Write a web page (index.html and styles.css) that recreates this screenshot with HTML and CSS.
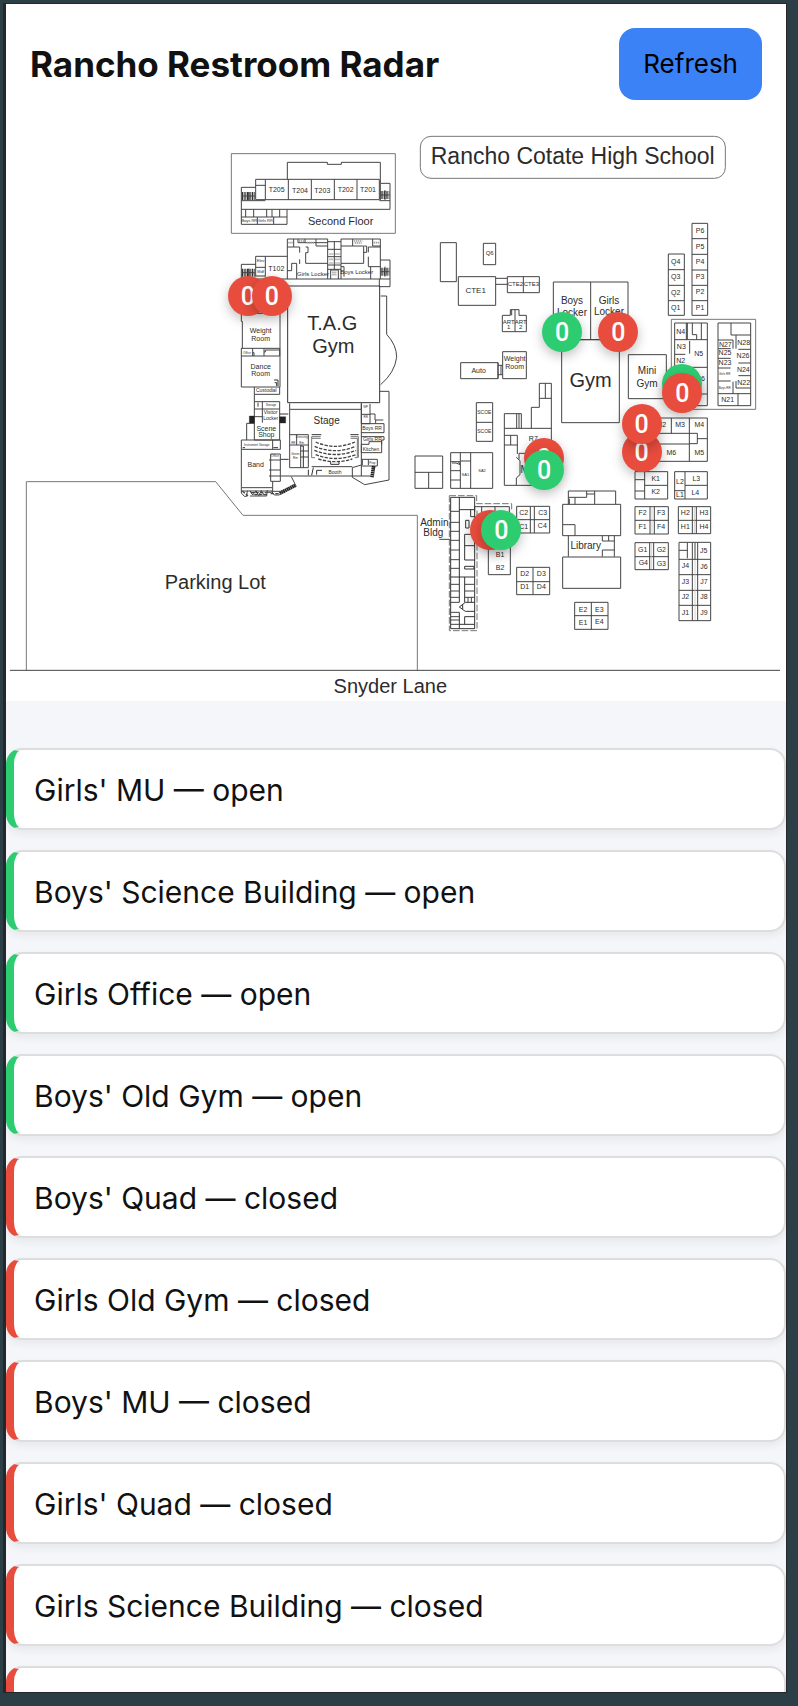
FILE: index.html
```html
<!DOCTYPE html>
<html lang="en">
<head>
<meta charset="utf-8">
<meta name="viewport" content="width=device-width, initial-scale=1">
<title>Rancho Restroom Radar</title>
<link rel="stylesheet" href="styles.css">
</head>
<body>
<div class="app">
<header class="header">
  <h1 class="title">Rancho Restroom Radar</h1>
  <button class="refresh" type="button">Refresh</button>
</header>
<main>
<section class="map" aria-label="Campus map">
<svg class="plan" viewBox="0 0 2340 1731" role="img" aria-label="Rancho Cotate High School">
  <!-- theater second floor, locker wing -->
  <g transform="translate(642 48)">
    <path class="thin" d="M34 41H526V280H34Z"/>
    <path d="M202 118V67H322V73H364V67H481V130M107 118H478V179H107ZM136 118V179M205 118V179M274 118V179M343 118V179M411 118V179M107 136H136M64 142H107M64 142V253H201V208M64 208H510V130H481V180M64 182H136M478 182H510M64 231H201M77 208V231M101 208V231M112 231V253M140 208V231M156 208V231M179 208V231M161 231V253"/>
    <path class="stairs" d="M66 168H104M482 165H508M66 398H104M482 395H508"/>
    <path d="M66 168H104M86 156V180M482 165H508M495 150V180M66 398H104M86 386V410M482 395H508M495 380V410"/>
    <path d="M202 297H323V417M202 297V417M363 297V417M363 297H481V417M107 349H202M107 349V410M136 349V410M107 382H136M107 408H136M64 373H107M64 373V440M64 417H510V360H481M478 417V440H510V417M202 321H221V297M234 297V308H255V297M255 308H323M288 297V318H323M202 392H215V370H230V417M239 321H221M239 321V338M239 358V372M257 321H264V338H257V370H323M332 390V417M355 390V417M332 390H355M323 305H363M323 328H363M323 350H363M323 375H363M323 388H363M343 305V388M363 318H431V370H363M398 318V297M431 337H440V318H433M458 297V318H481M445 337V321H481M445 350V380H481M452 380V417M363 380H372V410"/>
    <path class="bars" d="M205 308H219M237 303H252M260 308H284M328 342H341M346 342H360M328 358H341M346 358H360M328 369H341M346 369H360M402 303H427M404 309H425M461 308H477M337 397H350M337 404H350"/>
    <g class="s21"><text x="170" y="156">T205</text><text x="240" y="158">T204</text><text x="307" y="158">T203</text><text x="377" y="156">T202</text><text x="444" y="156">T201</text><text x="169" y="393">T102</text></g>
    <text class="s33" x="362" y="255">Second Floor</text>
    <g class="s18"><text x="279" y="407">Girls Locker</text><text x="410" y="403">Boys Locker</text></g>
    <g class="s12"><text x="88" y="247">Boys RR</text><text x="136" y="247">Girls RR</text><text x="122" y="367">Elev</text><text x="122" y="399">Mdf</text></g>
  </g>
  <!-- theater and T.A.G gym -->
  <g transform="translate(642 588)">
    <path class="heavy" d="M203 -102H479V248H203Z"/>
    <path d="M482 -72H500V43Q530 75 530 112Q524 158 482 194M62 -86H180V201M64 -20V4H67V85M62 -49V-20H179M64 85H179V108H64ZM98 85V108M132 85V108M98 98H102V108M132 96H136V90H179M64 108V201H179M103 201V223H179V201M103 245H179V308M103 223V360H179V308M103 267H179M127 245V308M103 290H127M114 248V260M64 360H181V388H64ZM158 360V388M80 310V360M80 310H103M64 388V503H158V484M152 402H181V484H152ZM147 420H181M147 450H181M147 468H181"/>
    <path d="M209 250V268H424V250M209 268V443H265V344H209M209 375H265M230 344V375M242 375V443M242 393H265M242 411H265M424 268V468M183 468H452M275 440H397M424 250V311H450V252M424 283H450M450 282H465V300H490M424 311H492V338H424M424 350H492V360H485V373M424 373H447V365H485V398H424V373M424 418H472V438H424M467 300V311M427 418V435M445 418V435M479 214H507V480L434 494L397 472V443L424 435"/>
    <path class="thin" d="M275 355V413M302 355H275V350H302M392 350H415V413M392 355H412V413M275 413H285M412 413H404"/>
    <path class="seats" d="M287 366Q345 392 405 366M284 379Q345 405 407 379M283 391Q345 416 408 391M287 404Q345 427 407 404M295 417Q345 433 397 417"/>
    <path class="heavy" d="M275 344H304M391 344H416M280 443L275 466M290 464V451H306M265 449V466M332 425V433H357V425M162 180H174V198M164 188H170V198M68 383H75M160 383H174M180 282H205M182 418H206M243 378H250V442"/>
    <path class="fill" d="M88 288H103V309H88ZM179 290H197V309H179Z"/>
    <path class="ramp" d="M461 438L456 472M179 520L226 496"/>
    <path d="M64 503V513H158V503M64 513V519L73 529H80L82 512M90 528H140L142 510M90 512L98 525L108 512L116 527L124 512L132 525M140 517H155M155 514L163 525H178L188 514H155M214 470L229 500"/>
    <path class="seats" d="M67 513L84 528M92 518H140M103 524H145M152 521H180"/>
    <g class="s60"><text x="337" y="30">T.A.G</text><text x="340" y="98">Gym</text></g>
    <text class="s30" x="320" y="311">Stage</text>
    <g class="s21"><text x="122" y="39">Weight</text><text x="122" y="62">Room</text><text x="122" y="146">Dance</text><text x="122" y="168">Room</text><text x="139" y="332">Scene</text><text x="139" y="351">Shop</text><text x="107" y="442">Band</text></g>
    <g class="s15"><text x="139" y="217">Custodial</text><text x="152" y="283">Visitor</text><text x="152" y="301">Locker</text><text x="456" y="329">Boys RR</text><text x="457" y="362">Girls RR</text><text x="453" y="392">Kitchen</text><text x="345" y="461">Booth</text></g>
    <g class="s9"><text x="81" y="101">Office</text><text x="110" y="377">Instrument Storage</text><text x="226" y="404">Green</text><text x="226" y="416">Rm</text><text x="165" y="412">Office</text><text x="245" y="354">Dressing</text><text x="153" y="259">Storage</text><text x="220" y="371">RR</text><text x="245" y="371">Rm</text><text x="437" y="264">WP</text><text x="437" y="294">RR</text><text x="457" y="433">Prop</text></g>
  </g>
  <!-- title plate and north buildings -->
  <g transform="translate(1182 -12)">
    <rect class="thin" x="61" y="49" width="915" height="126" rx="32"/>
    <text class="s69" x="518" y="133">Rancho Cotate High School</text>
    <path d="M121 368H169V485H121ZM250 370H287V434H250ZM175 470H287V556H175ZM287 475H322M287 493H322M322 470H418V518H322ZM370 470V518M307 635V586H331V569H357V586H379V635ZM345 569V635M335 569V586M460 486H684V659H460ZM572 486V659"/>
    <path d="M876 310H923V586H876ZM876 356H923M876 403H923M876 450H923M876 496H923M876 542H923M805 402H853V586H805ZM805 449H853M805 496H853M805 542H853"/>
    <g class="s21"><text x="900" y="338">P6</text><text x="900" y="386">P5</text><text x="900" y="432">P4</text><text x="900" y="478">P3</text><text x="900" y="523">P2</text><text x="900" y="570">P1</text><text x="827" y="432">Q4</text><text x="827" y="478">Q3</text><text x="827" y="525">Q2</text><text x="827" y="571">Q1</text></g>
    <g class="s18"><text x="269" y="404">Q6</text><text x="346" y="499">CTE2</text><text x="394" y="499">CTE3</text><text x="326" y="611">ART</text><text x="326" y="626">1</text><text x="362" y="611">ART</text><text x="362" y="626">2</text></g>
    <text class="s24" x="227" y="518">CTE1</text>
    <g class="s30"><text x="516" y="552">Boys</text><text x="516" y="587">Locker</text><text x="627" y="552">Girls</text><text x="627" y="585">Locker</text></g>
  </g>
  <!-- gyms and N wing -->
  <g transform="translate(1602 408)">
    <path d="M65 239H238V488H65ZM265 284H379V416H265Z"/>
    <path class="thin" d="M394 178H647V448H394Z"/>
    <path d="M404 189H502V437H404ZM404 239H502M439 189V239M442 189V239M457 189V224H470V239M484 189V239M404 283H436M449 243V281M404 322H502M404 402H502M467 402V437M534 189H632V437H534ZM573 189V225H632M588 225V266M534 240H579V266M534 266H572M534 295H572M534 324H572M534 363H572M534 401H594V437M594 401H632M595 268H632M595 309H632M595 347H632M588 363V384H632M579 365V401"/>
    <g class="s21"><text x="422" y="221">N4</text><text x="424" y="268">N3</text><text x="422" y="308">N2</text><text x="476" y="287">N5</text><text x="481" y="362">N6</text><text x="556" y="260">N27</text><text x="555" y="286">N25</text><text x="555" y="314">N23</text><text x="611" y="254">N28</text><text x="609" y="294">N26</text><text x="610" y="335">N24</text><text x="611" y="374">N22</text><text x="563" y="427">N21</text></g>
    <g class="s9"><text x="554" y="346">Girls RR</text><text x="554" y="386">Boys RR</text></g>
    <g class="s30"><text x="321" y="342">Mini</text><text x="321" y="380">Gym</text></g>
    <text class="s60" x="152" y="382">Gym</text>
  </g>
  <!-- auto shop, SCOE, SA, music -->
  <g transform="translate(1182 588)">
    <path d="M182 128H294V176H182ZM294 136H308M294 164H308M294 128V176M303 136V164M308 95H379V176H308ZM229 248H278V364H229ZM229 307H278M45 408H128V505H45ZM45 457H128M86 457V505M152 398H278V505H152ZM212 398V505M181 398V505M152 425H181M181 423H212M152 452H181M152 480H181M156 429H168L181 434L175 425"/>
    <path d="M418 190H454V496H313V281H364V325M313 325H454M436 190V235M418 190V262H394V325M418 235H454M350 281V325M357 281V325M313 346H352V375H313M332 346V375M352 375V402M349 412L360 422V464L349 474V496M357 400H454M357 400V418"/>
    <g class="s21"><text x="236" y="159">Auto</text><text x="344" y="124">Weight</text><text x="344" y="146">Room</text><text x="400" y="364">R7</text></g>
    <text class="s30" x="374" y="460">M</text>
    <g class="s15"><text x="253" y="281">SCOE</text><text x="253" y="338">SCOE</text></g>
    <g class="s12"><text x="196" y="468">SA1</text><text x="246" y="456">SA2</text></g>
  </g>
  <!-- administration, B, C and D blocks -->
  <g transform="translate(1182 1008)">
    <path class="dash" d="M148 107H230V131H335V152M148 107V512H231V152"/>
    <path class="heavy" d="M152 112H224V506H152ZM178 112V427M178 457V506M178 149H224M194 223H224M194 223V300H224M194 257H224M224 140V155M212 149V170H224M197 181H207V204H197ZM194 319H222V327H194ZM152 351H224M194 351V427M178 441L196 427H224M178 441L196 454H224M188 433V447M194 470H224M194 470V493M178 493H224"/>
    <path d="M152 154H178M152 187H178M152 214H178M152 241H178M152 270H178M152 299H178M152 325H178M152 373H178M152 393H178M152 412H178M152 427H178M194 373H224M194 393H224M194 412H224M204 412V427M214 412V427M152 457H178M152 470H178M152 480H178M152 493H178M224 140H328V160M245 140V160M285 140V160M265 240H331V344H265ZM118 238H149"/>
    <path d="M350 139H449V219H350ZM350 179H449M391 139V219M403 139V219M350 322H449V404H350ZM350 365H449M399 322V404"/>
    <g class="s21"><text x="300" y="292">B1</text><text x="300" y="329">B2</text><text x="371" y="165">C2</text><text x="428" y="166">C3</text><text x="371" y="207">C1</text><text x="427" y="204">C4</text><text x="374" y="347">D2</text><text x="424" y="347">D3</text><text x="374" y="387">D1</text><text x="424" y="388">D4</text></g>
    <g class="s30"><text x="103" y="198">Admin</text><text x="100" y="227">Bldg</text></g>
  </g>
  <!-- library and classroom blocks -->
  <g transform="translate(1662 828)">
    <path d="M220 54H442V184H220ZM388 54V184M334 54V100M220 100H388M220 132H388M388 100H412V131H388M412 116H442M225 215H323V297H225ZM254 215V297M254 256H323M225 239H254M225 273H254M344 215H442V297H344ZM375 215V297M375 256H442M344 272H375"/>
    <path d="M8 313H182V407H8ZM8 374H45V407M25 313V273H167V313M25 292H80V282H104V273M45 292V313M28 313V296M104 282V313M80 282V273M25 407V470M163 407V470M8 471H182V565H8ZM127 407V423H163M146 407V423M127 470V450H163"/>
    <path d="M225 320H325V402H225ZM225 361H325M270 320V402M283 320V402M355 320H452V401H355ZM355 361H452M397 320V401M409 320V401M225 428H325V509H225ZM225 470H325M269 428V509M281 428V509M357 427H452V662H357ZM357 478H452M357 524H452M357 571H452M357 616H452M397 427V662M413 427V662M405 427V478M357 451H382M382 427V475M44 607H144V688H44ZM44 647H144M94 607V688"/>
    <path class="gap" d="M276 322V400M403 322V399M275 430V507M405 480V660"/>
    <g class="s21"><text x="304" y="82">M2</text><text x="360" y="82">M3</text><text x="418" y="82">M4</text><text x="334" y="166">M6</text><text x="418" y="164">M5</text><text x="287" y="244">K1</text><text x="287" y="282">K2</text><text x="360" y="253">L2</text><text x="360" y="291">L1</text><text x="409" y="243">L3</text><text x="406" y="284">L4</text><text x="248" y="346">F2</text><text x="303" y="345">F3</text><text x="248" y="387">F1</text><text x="303" y="388">F4</text><text x="376" y="345">H2</text><text x="432" y="345">H3</text><text x="376" y="386">H1</text><text x="432" y="386">H4</text><text x="248" y="455">G1</text><text x="304" y="455">G2</text><text x="250" y="495">G4</text><text x="304" y="497">G3</text><text x="431" y="458">J5</text><text x="376" y="505">J4</text><text x="432" y="506">J6</text><text x="376" y="553">J3</text><text x="432" y="551">J7</text><text x="376" y="597">J2</text><text x="432" y="598">J8</text><text x="376" y="644">J1</text><text x="432" y="645">J9</text><text x="69" y="635">E2</text><text x="118" y="635">E3</text><text x="69" y="674">E1</text><text x="118" y="673">E4</text></g>
    <text class="s30" x="77" y="446">Library</text>
  </g>
  <!-- parking lot and street -->
  <g transform="translate(-18 1008)">
    <path class="thin" d="M79 631V65H647L729 166H1252V631"/>
    <path class="street" d="M30 631H2340"/>
    <g class="s60"><text x="646" y="388">Parking Lot</text><text x="1171" y="699">Snyder Lane</text></g>
  </g>
</svg>
<button type="button" class="pin closed tag-a">0</button>
<button type="button" class="pin closed tag-b">0</button>
<button type="button" class="pin open gym-boys">0</button>
<button type="button" class="pin closed gym-girls">0</button>
<button type="button" class="pin open n-a">0</button>
<button type="button" class="pin closed n-b">0</button>
<button type="button" class="pin closed quad-b">0</button>
<button type="button" class="pin closed quad-a">0</button>
<button type="button" class="pin closed mu-a">0</button>
<button type="button" class="pin open mu-b">0</button>
<button type="button" class="pin closed office-a">0</button>
<button type="button" class="pin open office-b">0</button>
</section>
<ul class="list">
  <li class="item is-open">Girls' MU — open</li>
  <li class="item is-open">Boys' Science Building — open</li>
  <li class="item is-open">Girls Office — open</li>
  <li class="item is-open">Boys' Old Gym — open</li>
  <li class="item is-closed">Boys' Quad — closed</li>
  <li class="item is-closed">Girls Old Gym — closed</li>
  <li class="item is-closed">Boys' MU — closed</li>
  <li class="item is-closed">Girls' Quad — closed</li>
  <li class="item is-closed">Girls Science Building — closed</li>
  <li class="item is-closed" aria-label="Closed restroom"></li>
</ul>
</main>
</div>
</body>
</html>
```
FILE: styles.css
```css
* { box-sizing: border-box; }

body {
  height: 100vh;
  margin: 0;
  padding: 4px 12px 14px 4px;
  background: #2c3e46;
  color: #111;
  font-family: Inter, "Liberation Sans", sans-serif;
  overflow: hidden;
}

.app {
  height: 100%;
  overflow: hidden;
  background: #f5f6fa;
  border-left: 2px solid #25272b;
  box-shadow: 0 0 0 1px #25272b;
}

.header {
  display: flex;
  align-items: center;
  justify-content: space-between;
  padding: 24px;
  background: #fff;
}

.title {
  margin: 0;
  font-size: 35px;
  line-height: 44px;
  font-weight: 700;
}

.refresh {
  height: 72px;
  padding: 0 24px;
  border: 0;
  border-radius: 16px;
  background: #3b82f6;
  color: #000;
  font: 400 26px/32px Inter, "Liberation Sans", sans-serif;
}

.map {
  position: relative;
  background: #fff;
}

.plan {
  display: block;
  width: 100%;
  height: auto;
  font-family: "Liberation Sans", Arial, sans-serif;
}

.plan path, .plan rect { fill: none; stroke: #444; stroke-width: 3; }
.plan .thin { stroke: #777; stroke-width: 3; }
.plan .heavy { stroke: #333; stroke-width: 3; }
.plan .fill { fill: #222; stroke: #222; stroke-width: 1; }
.plan .stairs { stroke: #333; stroke-width: 24; stroke-dasharray: 3 2; }
.plan .ramp { stroke: #222; stroke-width: 11; stroke-dasharray: 5 1; }
.plan .bars { stroke: #999; stroke-width: 5; stroke-dasharray: 4 2; }
.plan .seats { stroke: #444; stroke-width: 4; stroke-dasharray: 10 4; }
.plan .dash { stroke: #777; stroke-dasharray: 20 6; }
.plan .gap { stroke: #bbb; stroke-width: 2; }
.plan .street { stroke: #444; stroke-width: 3; }
.plan text { fill: #2c2c2c; text-anchor: middle; }

.s69 { font-size: 69px; }
.s60 { font-size: 60px; }
.s33 { font-size: 33px; }
.s30 { font-size: 30px; }
.s24 { font-size: 24px; }
.s21 { font-size: 21px; }
.s18 { font-size: 18px; }
.s15 { font-size: 15px; }
.s12 { font-size: 12px; }
.s9 { font-size: 9px; }

.pin {
  position: absolute;
  width: 40px;
  height: 40px;
  padding: 2px 0 0;
  border: 0;
  border-radius: 50%;
  color: #fff;
  font: 500 25px/38px Roboto, "Liberation Sans", sans-serif;
  text-align: center;
  transform: translate(-50%, -50%);
  box-shadow: 0 4px 12px rgba(0, 0, 0, 0.25);
}

.open { background: #2ecc71; }
.closed { background: #e74c3c; }

.tag-a { left: 31%; top: 29.8%; }
.tag-b { left: 34.1%; top: 29.8%; }
.gym-boys { left: 71.3%; top: 36%; }
.gym-girls { left: 78.5%; top: 36%; }
.n-a { left: 86.7%; top: 45%; }
.n-b { left: 86.7%; top: 46.6%; }
.quad-a { left: 81.5%; top: 52%; }
.quad-b { left: 81.5%; top: 56.8%; }
.mu-a { left: 69%; top: 57.9%; }
.mu-b { left: 69%; top: 60%; }
.office-a { left: 62%; top: 70.4%; }
.office-b { left: 63.5%; top: 70.4%; }

.list {
  display: flex;
  flex-direction: column;
  gap: 20px;
  margin: 0;
  padding: 47px 0 0;
  list-style: none;
}

.item {
  min-height: 82px;
  padding: 20px 20px 18px;
  border: 2px solid #ddd;
  border-left-width: 8px;
  border-radius: 16px;
  background: #fff;
  font-size: 30px;
  line-height: 40px;
  box-shadow: 0 4px 8px rgba(0, 0, 0, 0.06);
}

.is-open { border-left-color: #2ecc71; }
.is-closed { border-left-color: #e74c3c; }
```
